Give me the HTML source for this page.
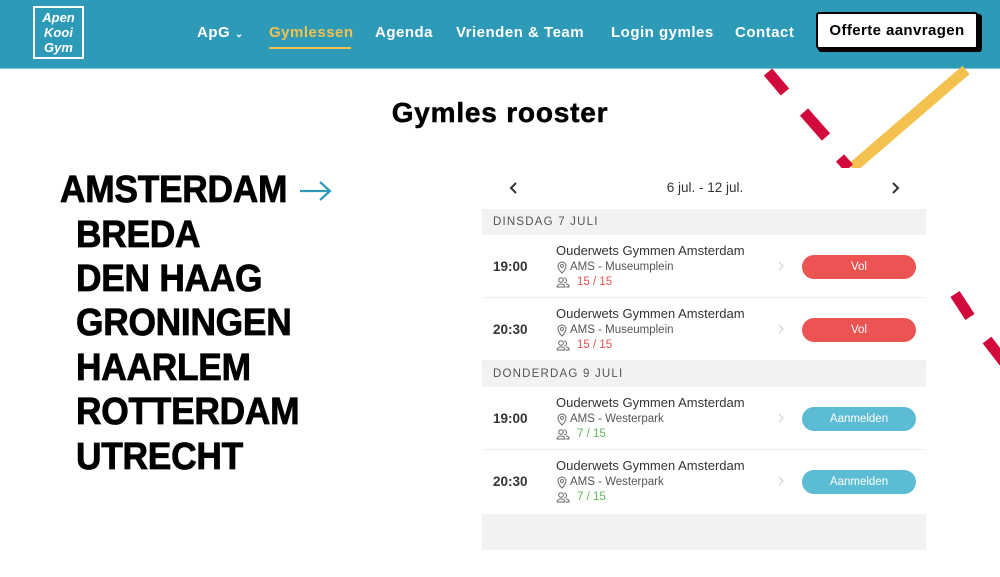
<!DOCTYPE html>
<html><head><meta charset="utf-8"><style>
*{margin:0;padding:0;box-sizing:border-box}
body{width:1000px;height:577px;overflow:hidden;background:#fff;font-family:"Liberation Sans",sans-serif;position:relative;color:#222}
.hdr{position:absolute;left:0;top:0;width:1000px;height:69px;background:#2d9ab8;border-bottom:1px solid #7bc3d6}
.nav{position:absolute;top:24px;font-weight:bold;font-size:15px;color:#fff;letter-spacing:.5px;white-space:nowrap}
.city{position:absolute;font-weight:bold;font-size:38px;color:#000;transform:scaleX(.93);transform-origin:left;white-space:nowrap;line-height:44px;letter-spacing:-.3px;-webkit-text-stroke:.8px #000}
.dh{position:absolute;left:482px;width:444px;height:26px;background:#f2f2f2;font-size:11.5px;letter-spacing:1.2px;color:#555;padding:7px 0 0 11px}
.row{position:absolute;left:482px;width:444px;height:63px;border-bottom:1px solid #eee}
.t{position:absolute;left:11px;top:24px;font-weight:bold;font-size:13.5px;color:#333}
.n{position:absolute;left:74px;top:8px;font-size:13px;color:#333}
.l{position:absolute;left:88px;top:26px;font-size:11.5px;color:#555}
.c{position:absolute;left:95px;top:41px;font-size:11.5px}
.ic{position:absolute;left:74px}
.ch{position:absolute;left:296px;top:26px}
.b{position:absolute;left:320px;top:20px;width:114px;height:24px;border-radius:12px;color:#fff;font-size:11.5px;text-align:center;line-height:24px}
</style></head><body>
<div class="hdr">
 <div style="position:absolute;left:33px;top:6px;width:51px;height:53px;border:2px solid #fff;color:#fff;font:italic bold 13px/15px 'Liberation Sans',sans-serif;text-align:center;padding-top:2px">Apen<br>Kooi<br>Gym</div>
 <div class="nav" style="left:197px">ApG <span style="font-size:10px">⌄</span></div>
 <div class="nav" style="left:269px;color:#f2c14e">Gymlessen</div>
 <div style="position:absolute;left:269px;top:47px;width:82px;height:2px;background:#f2c14e"></div>
 <div class="nav" style="left:375px">Agenda</div>
 <div class="nav" style="left:456px">Vrienden &amp; Team</div>
 <div class="nav" style="left:611px">Login gymles</div>
 <div class="nav" style="left:735px">Contact</div>
 <div style="position:absolute;left:818px;top:14px;width:164px;height:38px;background:#000;border-radius:3px"></div>
 <div style="position:absolute;left:816px;top:12px;width:162px;height:37px;background:#fff;border:2px solid #000;border-radius:3px;font-weight:bold;font-size:15px;text-align:center;line-height:33px;letter-spacing:.4px;color:#000">Offerte aanvragen</div>
</div>
<svg style="position:absolute;left:0;top:0" width="1000" height="577">
 <line x1="966" y1="70" x2="852" y2="168" stroke="#f2c14e" stroke-width="11"/>
 <g stroke="#d20a3c" stroke-width="11">
 <line x1="768" y1="72" x2="785" y2="92"/><line x1="804" y1="112" x2="826" y2="137"/><line x1="840" y1="158" x2="849" y2="168"/>
 <line x1="955" y1="294" x2="970" y2="317"/><line x1="987" y1="340" x2="1004" y2="362"/>
 </g>
 <rect x="835" y="168" width="40" height="8" fill="#fff"/>
</svg>
<div style="position:absolute;left:0;width:1000px;top:97px;text-align:center;font-weight:bold;font-size:28px;color:#000;letter-spacing:.8px;-webkit-text-stroke:.5px #000">Gymles rooster</div>
<div class="city" style="left:60px;top:168px">AMSTERDAM</div>
<svg style="position:absolute;left:298px;top:180px" width="36" height="22"><path d="M2 11H32M22 2L32 11L22 20" stroke="#2d9ab8" stroke-width="2.2" fill="none"/></svg>
<div class="city" style="left:76px;top:213px">BREDA</div>
<div class="city" style="left:76px;top:257px">DEN HAAG</div>
<div class="city" style="left:76px;top:301px">GRONINGEN</div>
<div class="city" style="left:76px;top:346px">HAARLEM</div>
<div class="city" style="left:76px;top:390px">ROTTERDAM</div>
<div class="city" style="left:76px;top:435px">UTRECHT</div>
<svg style="position:absolute;left:508px;top:181px" width="12" height="14"><path d="M8 2L3 7L8 12" stroke="#333" stroke-width="2" fill="none"/></svg>
<div style="position:absolute;left:600px;width:210px;top:180px;text-align:center;font-size:13.5px;color:#333">6 jul. - 12 jul.</div>
<svg style="position:absolute;left:889px;top:181px" width="12" height="14"><path d="M4 2L9 7L4 12" stroke="#333" stroke-width="2" fill="none"/></svg>
<div class="dh" style="top:209px">DINSDAG 7 JULI</div>
<div class="dh" style="top:361px">DONDERDAG 9 JULI</div>
<div style="position:absolute;left:482px;top:514px;width:444px;height:36px;background:#f2f2f2"></div>

<div class="row" style="top:235px"><div class="t">19:00</div><div class="n">Ouderwets Gymmen Amsterdam</div><svg class="ic" style="top:26px" width="12" height="13"><path d="M6 12C2 8 2 6 2 5A4 4 0 0 1 10 5C10 6 10 8 6 12Z M6 3.5A1.5 1.5 0 1 0 6.01 3.5" stroke="#666" fill="none"/></svg><div class="l">AMS - Museumplein</div><svg class="ic" style="top:42px" width="14" height="11"><circle cx="5" cy="3" r="2.3" stroke="#666" fill="none"/><path d="M1 10C1 6 9 6 9 10ZM8 1A2.3 2.3 0 0 1 8 6M10 7C12 7 13 8 13 10H10" stroke="#666" fill="none"/></svg><div class="c" style="color:#e05050">15 / 15</div><svg class="ch" width="6" height="10"><path d="M1 1L5 5L1 9" stroke="#ccc" fill="none"/></svg><div class="b" style="background:#ec5353">Vol</div></div>
<div class="row" style="top:298px"><div class="t">20:30</div><div class="n">Ouderwets Gymmen Amsterdam</div><svg class="ic" style="top:26px" width="12" height="13"><path d="M6 12C2 8 2 6 2 5A4 4 0 0 1 10 5C10 6 10 8 6 12Z M6 3.5A1.5 1.5 0 1 0 6.01 3.5" stroke="#666" fill="none"/></svg><div class="l">AMS - Museumplein</div><svg class="ic" style="top:42px" width="14" height="11"><circle cx="5" cy="3" r="2.3" stroke="#666" fill="none"/><path d="M1 10C1 6 9 6 9 10ZM8 1A2.3 2.3 0 0 1 8 6M10 7C12 7 13 8 13 10H10" stroke="#666" fill="none"/></svg><div class="c" style="color:#e05050">15 / 15</div><svg class="ch" width="6" height="10"><path d="M1 1L5 5L1 9" stroke="#ccc" fill="none"/></svg><div class="b" style="background:#ec5353">Vol</div></div>
<div class="row" style="top:387px"><div class="t">19:00</div><div class="n">Ouderwets Gymmen Amsterdam</div><svg class="ic" style="top:26px" width="12" height="13"><path d="M6 12C2 8 2 6 2 5A4 4 0 0 1 10 5C10 6 10 8 6 12Z M6 3.5A1.5 1.5 0 1 0 6.01 3.5" stroke="#666" fill="none"/></svg><div class="l">AMS - Westerpark</div><svg class="ic" style="top:42px" width="14" height="11"><circle cx="5" cy="3" r="2.3" stroke="#666" fill="none"/><path d="M1 10C1 6 9 6 9 10ZM8 1A2.3 2.3 0 0 1 8 6M10 7C12 7 13 8 13 10H10" stroke="#666" fill="none"/></svg><div class="c" style="color:#5cb85c">7 / 15</div><svg class="ch" width="6" height="10"><path d="M1 1L5 5L1 9" stroke="#ccc" fill="none"/></svg><div class="b" style="background:#5bbcd4">Aanmelden</div></div>
<div class="row" style="top:450px;border:none"><div class="t">20:30</div><div class="n">Ouderwets Gymmen Amsterdam</div><svg class="ic" style="top:26px" width="12" height="13"><path d="M6 12C2 8 2 6 2 5A4 4 0 0 1 10 5C10 6 10 8 6 12Z M6 3.5A1.5 1.5 0 1 0 6.01 3.5" stroke="#666" fill="none"/></svg><div class="l">AMS - Westerpark</div><svg class="ic" style="top:42px" width="14" height="11"><circle cx="5" cy="3" r="2.3" stroke="#666" fill="none"/><path d="M1 10C1 6 9 6 9 10ZM8 1A2.3 2.3 0 0 1 8 6M10 7C12 7 13 8 13 10H10" stroke="#666" fill="none"/></svg><div class="c" style="color:#5cb85c">7 / 15</div><svg class="ch" width="6" height="10"><path d="M1 1L5 5L1 9" stroke="#ccc" fill="none"/></svg><div class="b" style="background:#5bbcd4">Aanmelden</div></div>
</body></html>
